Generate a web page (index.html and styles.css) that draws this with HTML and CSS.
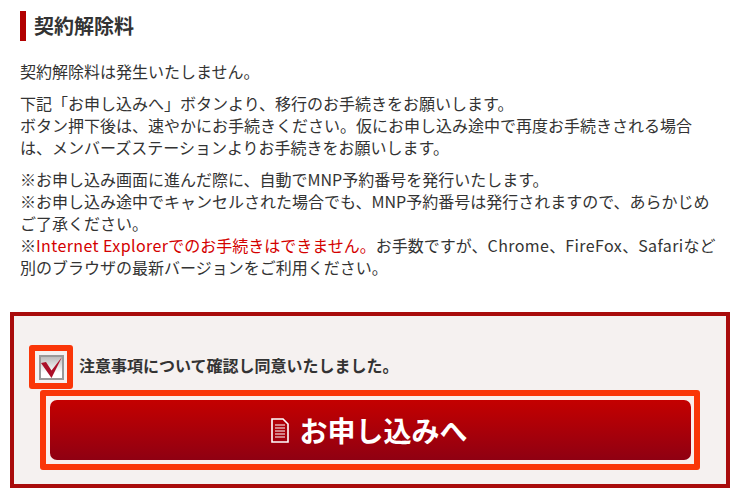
FILE: index.html
```html
<!DOCTYPE html>
<html lang="ja">
<head>
<meta charset="utf-8">
<title>契約解除料</title>
<link rel="stylesheet" href="styles.css">
</head>
<body>
<main class="page">
  <section class="notes">
    <h2 class="heading">契約解除料</h2>
    <p class="para">契約解除料は発生いたしません。</p>
    <p class="para">下記「お申し込みへ」ボタンより、移行のお手続きをお願いします。<br>ボタン押下後は、速やかにお手続きください。仮にお申し込み途中で再度お手続きされる場合<br>は、メンバーズステーションよりお手続きをお願いします。</p>
    <p class="para">※お申し込み画面に進んだ際に、自動でMNP予約番号を発行いたします。<br>※お申し込み途中でキャンセルされた場合でも、MNP予約番号は発行されますので、あらかじめ<br>ご了承ください。<br>※<span class="warn"><span class="latin">Internet Explorer</span>でのお手続きはできません。</span>お手数ですが、<span class="latin">Chrome</span>、<span class="latin">FireFox</span>、<span class="latin">Safari</span>など<br>別のブラウザの最新バージョンをご利用ください。</p>
  </section>
  <section class="panel">
    <label class="agree">
      <span class="check-ring">
        <span class="check-box">
          <svg class="check-mark" viewBox="0 0 21 21" aria-hidden="true"><path d="M0 6 L5 5 L10.5 13.5 L21 0 L10.5 21 Z"/></svg>
        </span>
      </span>
      <span class="agree-text">注意事項について確認し同意いたしました。</span>
    </label>
    <div class="submit-ring">
      <button class="submit" type="button">
        <svg class="doc" viewBox="0 0 18 25" aria-hidden="true">
          <path class="doc-outline" d="M1 1 H12 L17 6 V24 H1 Z"/>
          <path class="doc-lines" d="M4 7 H14 M4 10 H14 M4 13 H14 M4 16 H14 M4 19 H14"/>
        </svg>
        <span>お申し込みへ</span>
      </button>
    </div>
  </section>
</main>
</body>
</html>
```
FILE: styles.css
```css
* { box-sizing: border-box; }
html, body { margin: 0; padding: 0; background: #fff; }
body {
  width: 739px;
  height: 499px;
  overflow: hidden;
  font-family: "Noto Sans CJK JP", "Liberation Sans", sans-serif;
  color: #333;
}
.page { padding: 11px 9px 0 10px; }
.notes { padding: 0 10px; }
.heading {
  margin: 0;
  height: 30px;
  border-left: 6px solid #b20000;
  padding-left: 8px;
  font-size: 20px;
  line-height: 29px;
  font-weight: 700;
  color: #333;
}
.para {
  margin: 0 0 10px;
  font-size: 16px;
  line-height: 22px;
  white-space: nowrap;
}
.heading + .para { margin-top: 19px; }
.para:last-child { margin-bottom: 0; }
.warn { color: #d40000; }
.latin { letter-spacing: 0.4px; }
.panel {
  margin-top: 34px;
  height: 176px;
  border: 4px solid #a90c0c;
  background: #f5f1f0;
  padding: 29px 26px 0 15px;
}
.agree {
  display: flex;
  align-items: center;
  height: 44px;
}
.check-ring {
  width: 44px;
  height: 44px;
  border: 6px solid #fa3608;
  border-radius: 3px;
  background: #f5f1f0;
  display: flex;
  align-items: center;
  justify-content: center;
}
.check-box {
  width: 25px;
  height: 25px;
  border: 2px solid #999;
  background: linear-gradient(#bdbdbd, #fff 75%);
  display: block;
}
.check-mark { display: block; width: 21px; height: 21px; fill: #ab1029; }
.agree-text {
  margin-left: 6px;
  padding-bottom: 4px;
  font-size: 16px;
  font-weight: 700;
  color: #333;
}
.submit-ring {
  margin: 1px 0 0 11px;
  width: 660px;
  height: 80px;
  border: 6px solid #fa3608;
  border-radius: 3px;
  padding: 4px 3px 4px 4px;
  background: #f9eeec;
}
.submit {
  display: flex;
  align-items: center;
  justify-content: center;
  gap: 10px;
  width: 100%;
  height: 100%;
  margin: 0;
  padding: 0 2px 0 0;
  border: 0;
  border-radius: 7px;
  background: linear-gradient(#c40000, #8f0012);
  color: #fff;
  font-family: inherit;
  font-size: 28px;
  font-weight: 700;
}
.doc { width: 18px; height: 25px; display: block; }
.doc-outline { fill: none; stroke: #fff; stroke-width: 1.6; }
.doc-lines { fill: none; stroke: #fff; stroke-width: 1.2; }
```
